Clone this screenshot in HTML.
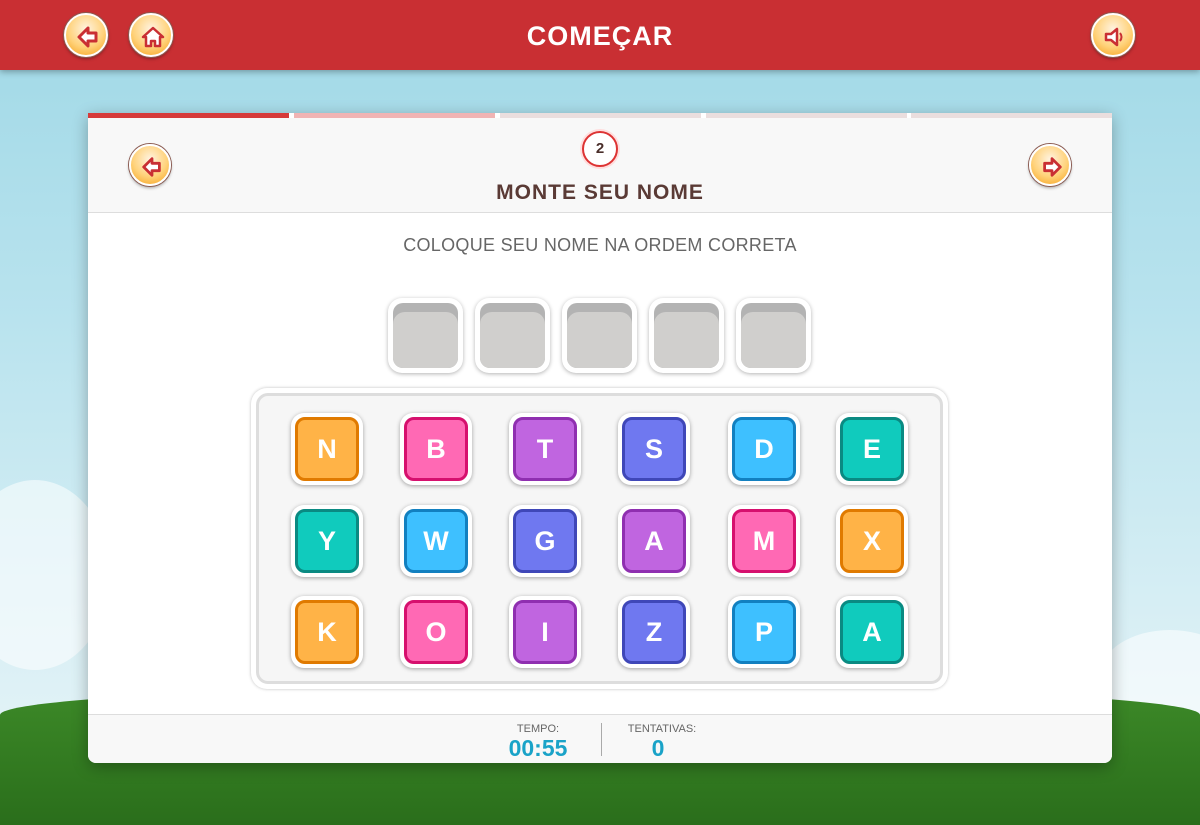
<!DOCTYPE html>
<html><head><meta charset="utf-8"><style>
*{box-sizing:border-box;margin:0;padding:0}
body{width:1200px;height:800px;overflow:hidden;position:relative;font-family:"Liberation Sans",sans-serif;
background:linear-gradient(#9fd8e6 0%,#b9e3ee 40%,#d6eef4 75%,#e8f5f8 100%)}
.top{position:absolute;left:0;top:0;width:1200px;height:70px;background:#c92f33;box-shadow:0 2px 6px rgba(0,0,0,.3)}
.top h1{position:absolute;left:0;width:1200px;top:21px;text-align:center;color:#fff;font-size:27px;font-weight:900;letter-spacing:1px}
.rb{position:absolute;width:44px;height:44px;border-radius:50%;background:radial-gradient(circle at 50% 35%,#fff3e0 0%,#ffd27a 55%,#f5a019 100%);border:2px solid #fff;box-shadow:0 0 0 1px #8a5a50,0 2px 3px rgba(0,0,0,.35)}
.rb svg{position:absolute;left:9px;top:9px}
.hill{position:absolute;left:0;top:685px;width:1200px;height:140px;background:linear-gradient(#3d8a28,#2a6e1b);border-radius:50% 50% 0 0/30px 30px 0 0}
.cloud{position:absolute;background:rgba(255,255,255,.55);border-radius:50%}
.card{position:absolute;left:88px;top:113px;width:1024px;height:650px;background:#fff;border-radius:0 0 8px 8px;box-shadow:0 4px 16px rgba(0,0,0,.3);overflow:hidden}
.prog{position:absolute;top:0;height:5px}
.head{position:absolute;top:5px;left:0;width:1024px;height:95px;background:#f8f8f8;border-bottom:1px solid #ddd}
.num{position:absolute;left:494px;top:13px;width:36px;height:36px;border-radius:50%;border:2px solid #d33;box-shadow:0 0 0 2px #fdd;background:#fff;text-align:center;line-height:32px;font-weight:900;font-size:15px;color:#4a2e2a}
.title{position:absolute;top:63px;width:1024px;text-align:center;font-size:21px;font-weight:900;color:#5a3a35;letter-spacing:1px}
.sub{position:absolute;top:122px;width:1024px;text-align:center;font-size:18px;color:#666;letter-spacing:.3px}
.slot{position:absolute;top:185px;width:75px;height:75px;border-radius:14px;background:#fff;box-shadow:0 1px 4px rgba(0,0,0,.3)}
.slot div{position:absolute;left:5px;top:5px;width:65px;height:65px;border-radius:10px;background:#b3b3b3;overflow:hidden}
.slot div:after{content:"";position:absolute;left:0;top:9px;width:65px;height:60px;border-radius:12px;background:#d0cfcd}
.tray{position:absolute;left:163px;top:275px;width:697px;height:301px;border-radius:16px;background:#fff;box-shadow:0 0 3px rgba(0,0,0,.25)}
.tray .in{position:absolute;left:5px;top:5px;right:5px;bottom:5px;border-radius:12px;background:#f6f6f6;border:3px solid #ddd}
.t{position:absolute;width:72px;height:72px;border-radius:13px;background:#fff;box-shadow:0 1px 4px rgba(0,0,0,.35)}
.t div{position:absolute;left:4px;top:4px;width:64px;height:64px;border-radius:10px;border:3px solid;text-align:center;line-height:58px;color:#fff;font-weight:900;font-size:27px}
.o{background:#ffb347;border-color:#e07a00!important}.p{background:#ff69b4;border-color:#d6106e!important}
.v{background:#c065e0;border-color:#8f2fb0!important}.i{background:#6f78f0;border-color:#3f47b8!important}
.b{background:#3ec0ff;border-color:#1280c0!important}.g{background:#10cbbd;border-color:#0a8a82!important}
.foot{position:absolute;top:601px;left:0;width:1024px;height:49px;background:#f8f8f8;border-top:1px solid #ddd}
.lab{position:absolute;top:8px;font-size:11px;color:#666;text-align:center}
.val{position:absolute;top:20px;font-size:23px;font-weight:900;color:#1aa3c8;text-align:center}
</style></head><body>
<div class="cloud" style="left:-40px;top:480px;width:150px;height:190px"></div>
<div class="cloud" style="left:1100px;top:630px;width:140px;height:90px"></div>
<div class="hill"></div>
<div class="top">
<h1>COMEÇAR</h1>
<div class="rb" style="left:64px;top:13px"><svg width="26" height="26" viewBox="0 0 26 26"><path d="M13 4 L4 13 L13 22 L13 17 L21 17 L21 9 L13 9 Z" fill="#fff" stroke="#c92f33" stroke-width="3" stroke-linejoin="round"/></svg></div>
<div class="rb" style="left:129px;top:13px"><svg width="26" height="26" viewBox="0 0 26 26"><path d="M13 4 L3 13 L6 13 L6 22 L11 22 L11 17 L15 17 L15 22 L20 22 L20 13 L23 13 Z" fill="#fff" stroke="#c92f33" stroke-width="2.5" stroke-linejoin="round"/></svg></div>
<div class="rb" style="left:1091px;top:13px"><svg width="26" height="26" viewBox="0 0 26 26"><path d="M4 10 L9 10 L15 5 L15 21 L9 16 L4 16 Z" fill="#fff" stroke="#c92f33" stroke-width="2.5" stroke-linejoin="round"/><path d="M18 9 Q21 13 18 17" fill="none" stroke="#c92f33" stroke-width="2"/></svg></div>
</div>
<div class="card">
<div class="prog" style="left:0;width:201px;background:#d63a3a"></div>
<div class="prog" style="left:206px;width:201px;background:#f0b4b4"></div>
<div class="prog" style="left:412px;width:201px;background:#eadede"></div>
<div class="prog" style="left:618px;width:201px;background:#eadede"></div>
<div class="prog" style="left:823px;width:201px;background:#eadede"></div>
<div class="head">
<div class="rb" style="left:41px;top:26px;width:42px;height:42px"><svg width="24" height="24" viewBox="0 0 26 26"><path d="M13 4 L4 13 L13 22 L13 17 L21 17 L21 9 L13 9 Z" fill="#fff" stroke="#c92f33" stroke-width="3" stroke-linejoin="round"/></svg></div>
<div class="rb" style="left:941px;top:26px;width:42px;height:42px"><svg width="24" height="24" viewBox="0 0 26 26"><path d="M13 4 L22 13 L13 22 L13 17 L5 17 L5 9 L13 9 Z" fill="#fff" stroke="#c92f33" stroke-width="3" stroke-linejoin="round"/></svg></div>
<div class="num">2</div>
<div class="title">MONTE SEU NOME</div>
</div>
<div class="sub">COLOQUE SEU NOME NA ORDEM CORRETA</div>
<div class="slot" style="left:300px"><div></div></div>
<div class="slot" style="left:387px"><div></div></div>
<div class="slot" style="left:474px"><div></div></div>
<div class="slot" style="left:561px"><div></div></div>
<div class="slot" style="left:648px"><div></div></div>
<div class="tray"><div class="in"></div></div>
<div class="t" style="left:203px;top:300px"><div class="o">N</div></div>
<div class="t" style="left:312px;top:300px"><div class="p">B</div></div>
<div class="t" style="left:421px;top:300px"><div class="v">T</div></div>
<div class="t" style="left:530px;top:300px"><div class="i">S</div></div>
<div class="t" style="left:640px;top:300px"><div class="b">D</div></div>
<div class="t" style="left:748px;top:300px"><div class="g">E</div></div>
<div class="t" style="left:203px;top:392px"><div class="g">Y</div></div>
<div class="t" style="left:312px;top:392px"><div class="b">W</div></div>
<div class="t" style="left:421px;top:392px"><div class="i">G</div></div>
<div class="t" style="left:530px;top:392px"><div class="v">A</div></div>
<div class="t" style="left:640px;top:392px"><div class="p">M</div></div>
<div class="t" style="left:748px;top:392px"><div class="o">X</div></div>
<div class="t" style="left:203px;top:483px"><div class="o">K</div></div>
<div class="t" style="left:312px;top:483px"><div class="p">O</div></div>
<div class="t" style="left:421px;top:483px"><div class="v">I</div></div>
<div class="t" style="left:530px;top:483px"><div class="i">Z</div></div>
<div class="t" style="left:640px;top:483px"><div class="b">P</div></div>
<div class="t" style="left:748px;top:483px"><div class="g">A</div></div>
<div class="foot">
<div class="lab" style="left:410px;width:80px">TEMPO:</div>
<div class="val" style="left:410px;width:80px">00:55</div>
<div style="position:absolute;left:513px;top:8px;width:1px;height:33px;background:#aaa"></div>
<div class="lab" style="left:524px;width:100px">TENTATIVAS:</div>
<div class="val" style="left:524px;width:92px">0</div>
</div>
</div>
</body></html>
